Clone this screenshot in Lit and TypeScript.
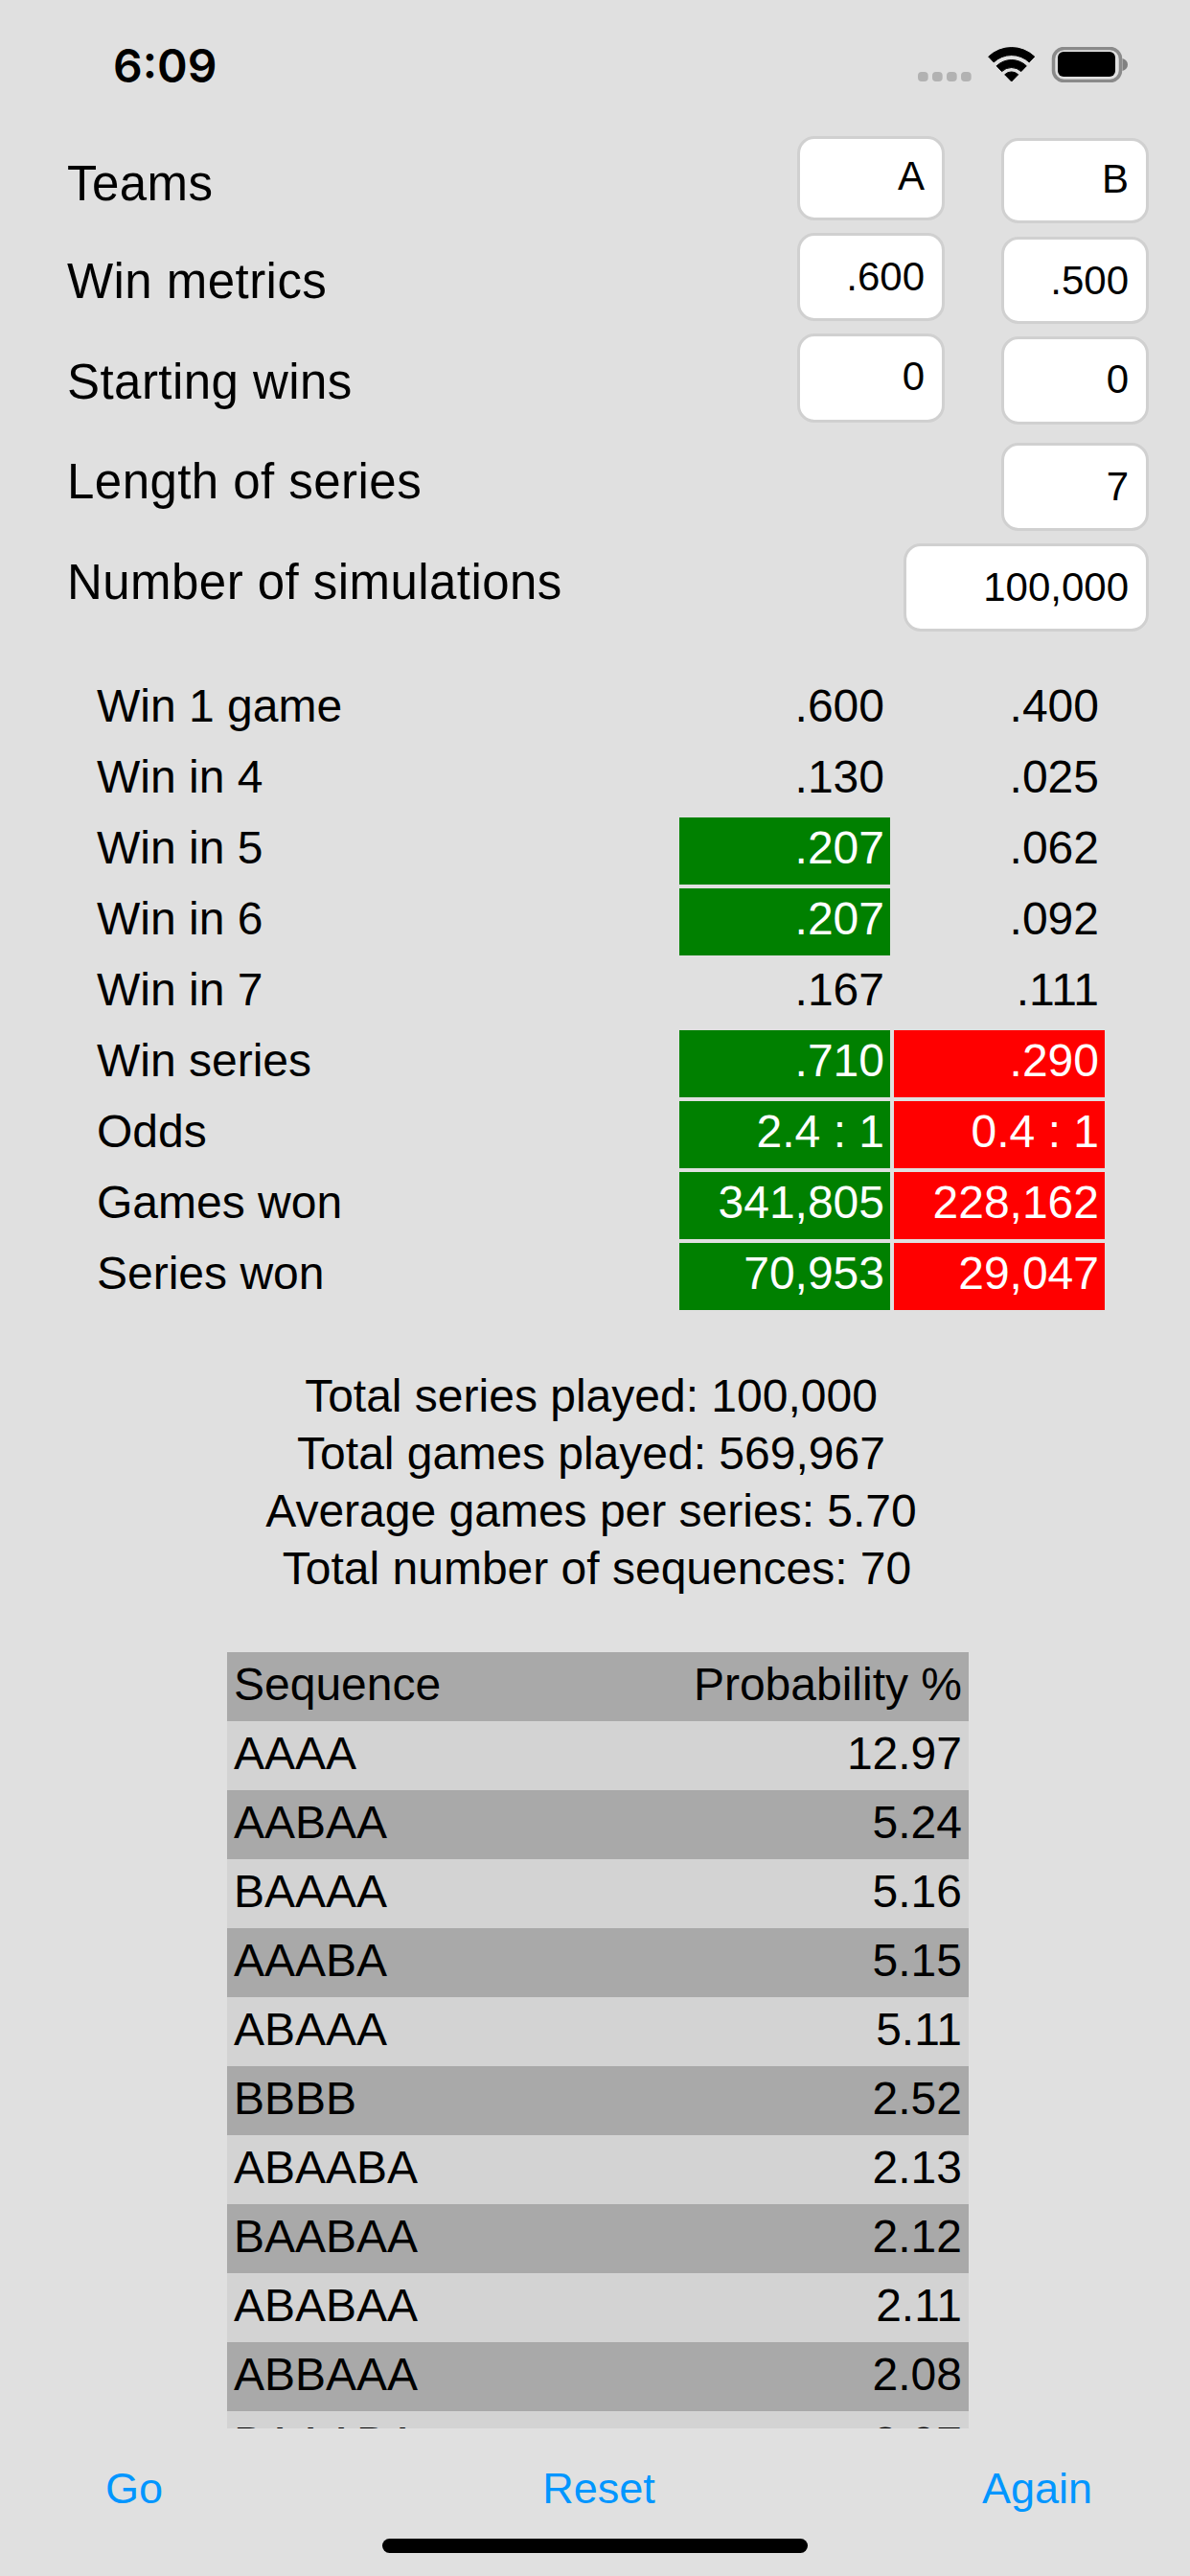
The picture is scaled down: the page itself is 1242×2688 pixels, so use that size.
import { LitElement, html, css, svg } from "lit";
import { customElement } from "lit/decorators.js";

type FormRow = { label: string; cls: string; a?: string; b: string; wide?: boolean };
type ResultRow = { label: string; a: string; b: string; ca?: string; cb?: string };

const FORM: FormRow[] = [
  { label: "Teams", cls: "r1", a: "A", b: "B" },
  { label: "Win metrics", cls: "r2", a: ".600", b: ".500" },
  { label: "Starting wins", cls: "r3", a: "0", b: "0" },
  { label: "Length of series", cls: "r4", b: "7" },
  { label: "Number of simulations", cls: "r5", b: "100,000", wide: true },
];

const RESULTS: ResultRow[] = [
  { label: "Win 1 game", a: ".600", b: ".400" },
  { label: "Win in 4", a: ".130", b: ".025" },
  { label: "Win in 5", a: ".207", b: ".062", ca: "green" },
  { label: "Win in 6", a: ".207", b: ".092", ca: "green" },
  { label: "Win in 7", a: ".167", b: ".111" },
  { label: "Win series", a: ".710", b: ".290", ca: "green", cb: "red" },
  { label: "Odds", a: "2.4 : 1", b: "0.4 : 1", ca: "green", cb: "red" },
  { label: "Games won", a: "341,805", b: "228,162", ca: "green", cb: "red" },
  { label: "Series won", a: "70,953", b: "29,047", ca: "green", cb: "red" },
];

const STATS = [
  "Total series played: 100,000",
  "Total games played: 569,967",
  "Average games per series: 5.70",
  "Total number of sequences: 70",
];

const SEQUENCES: [string, string][] = [
  ["Sequence", "Probability %"],
  ["AAAA", "12.97"],
  ["AABAA", "5.24"],
  ["BAAAA", "5.16"],
  ["AAABA", "5.15"],
  ["ABAAA", "5.11"],
  ["BBBB", "2.52"],
  ["ABAABA", "2.13"],
  ["BAABAA", "2.12"],
  ["ABABAA", "2.11"],
  ["ABBAAA", "2.08"],
  ["BAAABA", "2.07"],
];

const statusIcons = svg`
  <rect x="0" y="26" width="10.7" height="10" rx="4" fill="#b2b2b2"></rect>
  <rect x="15" y="26" width="10.7" height="10" rx="4" fill="#b2b2b2"></rect>
  <rect x="30" y="26" width="10.7" height="10" rx="4" fill="#b2b2b2"></rect>
  <rect x="45" y="26" width="10.7" height="10" rx="4" fill="#b2b2b2"></rect>
  <path d="M73.7 10.1A35 35 0 0 1 121.7 10.1L116.2 15.9A27 27 0 0 0 79.2 15.9Z" fill="#000" stroke="#000" stroke-width="1" stroke-linejoin="round"></path>
  <path d="M82.1 19.8A22.5 22.5 0 0 1 113.3 19.8L107.8 25.6A14.5 14.5 0 0 0 87.6 25.6Z" fill="#000" stroke="#000" stroke-width="1" stroke-linejoin="round"></path>
  <path d="M90.7 28.8A10 10 0 0 1 104.7 28.8L97.7 36Z" fill="#000" stroke="#000" stroke-width="1" stroke-linejoin="round"></path>
  <rect x="141.5" y="1.5" width="70" height="34" rx="11" fill="none" stroke="#8a8a8a" stroke-width="3.5"></rect>
  <rect x="146" y="5" width="60" height="26" rx="6" fill="#000"></rect>
  <path d="M213.5 12C217 13 219 15.5 219 18.5C219 21.5 217 24 213.5 25Z" fill="#808080"></path>
`;

@customElement("app-root")
export class AppRoot extends LitElement {
  static styles = css`
    :host {
      display: block;
      width: 1242px;
      height: 2688px;
      overflow: hidden;
      background: #e0e0e0;
      color: #000;
      font-family: "Liberation Sans", Arial, sans-serif;
    }
    .status {
      display: flex;
      justify-content: space-between;
      align-items: flex-start;
      height: 142px;
      box-sizing: border-box;
      padding: 46px 65px 0 118px;
    }
    .status svg { display: block; margin-top: 3px; }
    .time {
      font-family: Inter, "Liberation Sans", sans-serif;
      font-weight: 600;
      font-size: 48px;
      line-height: 46px;
    }

    .form { padding: 0 43px 0 70px; }
    .row { display: flex; align-items: flex-start; }
    .label {
      flex: 1;
      font-size: 51px;
      line-height: 60px;
      letter-spacing: 0.45px;
    }
    .field {
      box-sizing: border-box;
      width: 154px;
      flex: none;
      display: flex;
      align-items: center;
      justify-content: flex-end;
      padding-right: 18px;
      background: #fff;
      border: 3px solid #d0d0d0;
      border-radius: 18px;
      font-size: 42px;
      height: 92px;
    }
    .field.wide { width: 256px; }
    .field.b { margin-left: 59px; }
    .r1 { height: 101px; }
    .r2 { height: 105px; }
    .r3 { height: 114px; }
    .r4 { height: 105px; }
    .r5 { height: 92px; }
    .r1 .label { margin-top: 20px; }
    .r2 .label { margin-top: 21px; }
    .r3 .label { margin-top: 21px; }
    .r4 .label { margin-top: 11px; }
    .r5 .label { margin-top: 11px; }
    .r1 .field { height: 88px; padding-bottom: 4px; }
    .r1 .field.b { height: 89px; margin-top: 2px; padding-bottom: 3px; }
    .r2 .field.b { height: 91px; margin-top: 4px; }
    .r3 .field { height: 93px; padding-bottom: 3px; }
    .r3 .field.b { height: 92px; margin-top: 3px; }

    .results {
      display: grid;
      grid-template-columns: 604px 220px 220px;
      column-gap: 4px;
      row-gap: 4px;
      grid-auto-rows: 70px;
      margin: 46px 0 0 101px;
      font-size: 48px;
      line-height: 64px;
    }
    .cell { text-align: right; padding-right: 6px; }
    .green { background: #008000; color: #fff; }
    .red { background: #ff0000; color: #fff; }

    .stats {
      margin-top: 60px;
      font-size: 48px;
      line-height: 60px;
      text-align: center;
      padding-right: 8px;
    }
    .stats .last { padding-left: 12px; }

    .table {
      margin: 57px 0 0 237px;
      width: 774px;
      height: 810px;
      overflow: hidden;
      font-size: 48px;
    }
    .seq {
      display: flex;
      justify-content: space-between;
      height: 72px;
      line-height: 68px;
      padding: 0 7px;
      box-sizing: border-box;
      background: #d3d3d3;
    }
    .seq.dark { background: #a9a9a9; }

    .footer {
      display: grid;
      grid-template-columns: 1fr auto 1fr;
      margin-top: 33px;
      padding: 0 102px 0 110px;
      font-size: 45px;
      line-height: 60px;
      color: #0096ff;
    }
    .footer .end { justify-self: end; }
    .home {
      width: 444px;
      height: 15px;
      margin: 22px auto 0;
      border-radius: 8px;
      background: #000;
    }
  `;

  render() {
    return html`
      <div class="status">
        <div class="time">6:09</div>
        <svg width="219" height="37" viewBox="0 0 219 37">${statusIcons}</svg>
      </div>

      <div class="form">
        ${FORM.map(
          (r) => html`
            <div class="row ${r.cls}">
              <div class="label">${r.label}</div>
              ${r.a !== undefined ? html`<div class="field a">${r.a}</div>` : ""}
              <div class="field ${r.wide ? "wide" : r.a !== undefined ? "b" : ""}">${r.b}</div>
            </div>
          `
        )}
      </div>

      <div class="results">
        ${RESULTS.map(
          (r) => html`
            <div>${r.label}</div>
            <div class="cell ${r.ca ?? ""}">${r.a}</div>
            <div class="cell ${r.cb ?? ""}">${r.b}</div>
          `
        )}
      </div>

      <div class="stats">
        ${STATS.map((s, i) => html`<div class=${i === 3 ? "last" : ""}>${s}</div>`)}
      </div>

      <div class="table">
        ${SEQUENCES.map(
          ([seq, p], i) => html`
            <div class="seq ${i % 2 === 0 ? "dark" : ""}"><span>${seq}</span><span>${p}</span></div>
          `
        )}
      </div>

      <div class="footer">
        <div>Go</div>
        <div>Reset</div>
        <div class="end">Again</div>
      </div>
      <div class="home"></div>
    `;
  }
}
